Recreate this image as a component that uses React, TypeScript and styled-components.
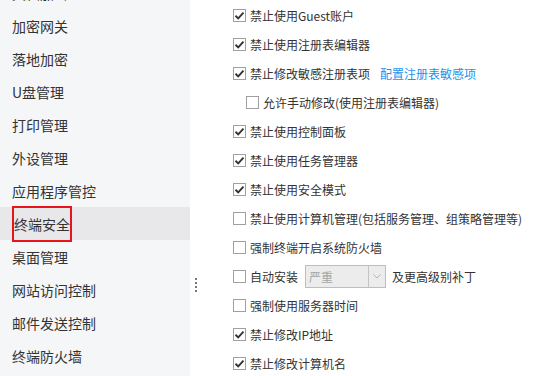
import styled, { createGlobalStyle } from "styled-components";

const GlobalStyle = createGlobalStyle`
  html, body {
    margin: 0;
    padding: 0;
    background: #ffffff;
    overflow: hidden;
  }
  body {
    font-family: "Noto Sans CJK SC", "Noto Sans", sans-serif;
    color: #333333;
  }
`;

const Root = styled.div`
  width: 539px;
  height: 376px;
  display: flex;
  overflow: hidden;
`;

const Sidebar = styled.div`
  width: 190px;
  flex-shrink: 0;
  background: #f5f6f8;
  display: flex;
  flex-direction: column;
  margin-top: -24px;
`;

const MenuItem = styled.div<{ $active?: boolean }>`
  height: 33px;
  flex-shrink: 0;
  display: flex;
  align-items: center;
  padding-left: 12px;
  font-size: 14px;
  color: #333;
  background: ${(p) => (p.$active ? "#e8e8ea" : "transparent")};
`;

const ActiveLabel = styled.span`
  display: flex;
  align-items: center;
  height: 32px;
  width: 56px;
  border: 2px solid #e8141b;
`;

const Splitter = styled.div`
  width: 15px;
  flex-shrink: 0;
  display: flex;
  flex-direction: column;
  align-items: flex-start;
  padding: 278px 0 0 5px;
  box-sizing: border-box;
  gap: 2px;
`;

const Dot = styled.span`
  width: 2px;
  height: 2px;
  background: #777;
`;

const Content = styled.div`
  flex: 1;
  padding: 1px 0 0 28px;
  display: flex;
  flex-direction: column;
`;

const Row = styled.div<{ $indent?: boolean }>`
  height: 29px;
  flex-shrink: 0;
  display: flex;
  align-items: center;
  padding-left: ${(p) => (p.$indent ? "13px" : "0")};
  font-size: 12px;
  color: #333;
  white-space: nowrap;
`;

const Box = styled.span`
  width: 13px;
  height: 13px;
  box-sizing: border-box;
  border: 1px solid #a0a0a0;
  background: #fff;
  margin-right: 4px;
  display: flex;
  align-items: center;
  justify-content: center;
  flex-shrink: 0;
`;

const Link = styled.span`
  color: #2492ea;
  margin-left: 10px;
`;

const Select = styled.div`
  width: 81px;
  height: 23px;
  box-sizing: border-box;
  border: 1px solid #bdbdbd;
  background: #ececec;
  display: flex;
  margin: 0 6px 0 7px;
`;

const SelectText = styled.span`
  flex: 1;
  display: flex;
  align-items: center;
  padding-left: 3px;
  color: #a5a5a5;
  font-size: 12px;
`;

const SelectArrow = styled.span`
  width: 16px;
  border-left: 1px solid #c4c4c4;
  display: flex;
  align-items: center;
  justify-content: center;
`;

const Check = ({ checked }: { checked?: boolean }) => (
  <Box>
    {checked && (
      <svg width="11" height="11" viewBox="0 0 11 11">
        <path d="M1.5 5.8 L4.2 8.4 L9.5 2.6" fill="none" stroke="#333" strokeWidth="1.9" />
      </svg>
    )}
  </Box>
);

const menu = [
  "文档加密",
  "加密网关",
  "落地加密",
  "U盘管理",
  "打印管理",
  "外设管理",
  "应用程序管控",
  "终端安全",
  "桌面管理",
  "网站访问控制",
  "邮件发送控制",
  "终端防火墙",
];

const App = () => {
  return (
    <Root>
      <GlobalStyle />
      <Sidebar>
        {menu.map((m) =>
          m === "终端安全" ? (
            <MenuItem key={m} $active>
              <ActiveLabel>{m}</ActiveLabel>
            </MenuItem>
          ) : (
            <MenuItem key={m}>{m}</MenuItem>
          )
        )}
      </Sidebar>
      <Splitter>
        <Dot />
        <Dot />
        <Dot />
        <Dot />
      </Splitter>
      <Content>
        <Row>
          <Check checked />
          禁止使用Guest账户
        </Row>
        <Row>
          <Check checked />
          禁止使用注册表编辑器
        </Row>
        <Row>
          <Check checked />
          禁止修改敏感注册表项
          <Link>配置注册表敏感项</Link>
        </Row>
        <Row $indent>
          <Check />
          允许手动修改(使用注册表编辑器)
        </Row>
        <Row>
          <Check checked />
          禁止使用控制面板
        </Row>
        <Row>
          <Check checked />
          禁止使用任务管理器
        </Row>
        <Row>
          <Check checked />
          禁止使用安全模式
        </Row>
        <Row>
          <Check />
          禁止使用计算机管理(包括服务管理、组策略管理等)
        </Row>
        <Row>
          <Check />
          强制终端开启系统防火墙
        </Row>
        <Row>
          <Check />
          自动安装
          <Select>
            <SelectText>严重</SelectText>
            <SelectArrow>
              <svg width="8" height="5" viewBox="0 0 8 5">
                <path d="M0.5 0.5 L4 4 L7.5 0.5" fill="none" stroke="#b5b5b5" strokeWidth="1" />
              </svg>
            </SelectArrow>
          </Select>
          及更高级别补丁
        </Row>
        <Row>
          <Check />
          强制使用服务器时间
        </Row>
        <Row>
          <Check checked />
          禁止修改IP地址
        </Row>
        <Row>
          <Check checked />
          禁止修改计算机名
        </Row>
      </Content>
    </Root>
  );
};

export default App;
